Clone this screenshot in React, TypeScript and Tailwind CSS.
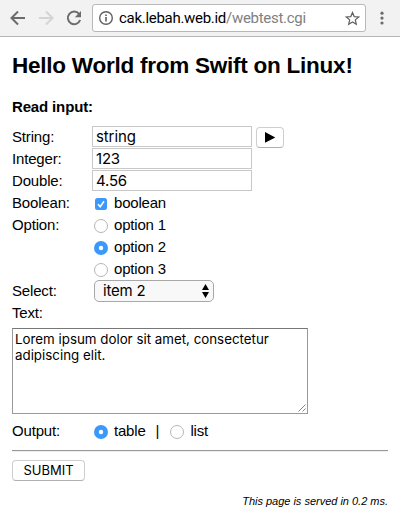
import type { ReactNode } from "react";

function Row({ label, children }: { label?: string; children?: ReactNode }) {
  return (
    <div className="flex h-[22px]">
      <span className="w-20 shrink-0 tracking-[-0.17px]">{label}</span>
      {children}
    </div>
  );
}

function TextField({ value, spacing }: { value: string; spacing: string }) {
  return (
    <input
      defaultValue={value}
      className={`h-[21px] w-40 rounded-none border border-[#c8c8c8] bg-white px-[3px] font-['Inter',sans-serif] text-[15px] leading-[19px] outline-none ${spacing}`}
    />
  );
}

function Radio({ checked = false }: { checked?: boolean }) {
  return (
    <svg className="mt-[5px] h-[14px] w-[14px] shrink-0" viewBox="0 0 14 14">
      {checked ? (
        <>
          <circle cx="7" cy="7" r="7" fill="#3b99fc" />
          <circle cx="7" cy="7" r="2.2" fill="#fff" />
        </>
      ) : (
        <circle cx="7" cy="7" r="6.5" fill="#fff" stroke="#b5b5b5" />
      )}
    </svg>
  );
}

function Option({ label, checked }: { label: string; checked?: boolean }) {
  return (
    <label className="ml-[2px] flex gap-[6px]">
      <Radio checked={checked} />
      <span className="whitespace-nowrap tracking-[-0.2px]">{label}</span>
    </label>
  );
}

function Toolbar() {
  return (
    <header className="flex h-[37px] items-center border-b border-[#b5b5b5] bg-[#f2f2f2]">
      <svg className="ml-[10px] h-4 w-4" viewBox="0 0 16 16" fill="none" stroke="#6b6b6b" strokeWidth="2">
        <path d="M15 8H2.5M8 1.5L1.5 8L8 14.5" />
      </svg>
      <svg className="ml-[12px] h-4 w-4" viewBox="0 0 16 16" fill="none" stroke="#d4d4d4" strokeWidth="2">
        <path d="M1 8H13.5M8 1.5L14.5 8L8 14.5" />
      </svg>
      <svg className="ml-[12px] h-4 w-4" viewBox="0 0 16 16" fill="none">
        <path d="M13.1 4A6.3 6.3 0 1 0 14.1 10" stroke="#6b6b6b" strokeWidth="2" />
        <path d="M15 1V7.2H8.8Z" fill="#6b6b6b" />
      </svg>
      <div className="ml-[10px] flex h-[28px] w-[274px] shrink-0 items-center rounded-[3px] border border-[#b8b8b8] bg-white">
        <svg className="ml-[6px] h-[14px] w-[14px] shrink-0" viewBox="0 0 14 14" fill="none" stroke="#606060">
          <circle cx="7" cy="7" r="6.3" strokeWidth="1.4" />
          <path d="M7 6V10.6M7 3.4V5" strokeWidth="1.6" />
        </svg>
        <div className="ml-[6px] flex-1 whitespace-nowrap font-['Roboto',sans-serif] text-[15px] tracking-[-0.29px] text-black">
          cak.lebah.web.id<span className="text-[#808080]">/webtest.cgi</span>
        </div>
        <svg className="mr-[5px] h-[15px] w-[15px] shrink-0" viewBox="0 0 15 15" fill="none" stroke="#606060" strokeWidth="1.2">
          <path d="M7.5 1.5L9.2 5.6L13.7 6L10.3 8.9L11.3 13.2L7.5 10.9L3.7 13.2L4.7 8.9L1.3 6L5.8 5.6Z" />
        </svg>
      </div>
      <svg className="ml-[14px] h-[14px] w-1" viewBox="0 0 4 14" fill="#6b6b6b">
        <circle cx="2" cy="2.2" r="1.6" />
        <circle cx="2" cy="7.1" r="1.6" />
        <circle cx="2" cy="12" r="1.6" />
      </svg>
    </header>
  );
}

export default function App() {
  return (
    <div className="h-[520px] w-[400px] overflow-hidden bg-white font-['Liberation_Sans',Arial,sans-serif] text-[15px] leading-[22px] text-black">
      <Toolbar />
      <main className="px-3">
        <h2 className="pt-[16px] text-[22.5px] leading-[26px] font-bold tracking-[-0.24px] whitespace-nowrap">Hello World from Swift on Linux!</h2>
        <h4 className="mt-[17px] font-bold tracking-[-0.15px]">Read input:</h4>
        <form className="mt-[8px]">
          <Row label="String:">
            <TextField value="string" spacing="tracking-[-0.1px]" />
            <button type="button" className="mt-px ml-1 flex h-[21px] w-7 items-center justify-center rounded-[4px] border border-[#cfcfcf] border-b-[#b0b0b0] bg-white">
              <svg className="mb-px h-[11px] w-[11px]" viewBox="0 0 11 11">
                <path d="M0 0L10.3 5.4L0 10.8Z" />
              </svg>
            </button>
          </Row>
          <Row label="Integer:"><TextField value="123" spacing="tracking-[-0.2px]" /></Row>
          <Row label="Double:"><TextField value="4.56" spacing="tracking-[-0.2px]" /></Row>
          <Row label="Boolean:">
            <label className="ml-[3px] flex gap-[7px]">
              <svg className="mt-[6px] h-3 w-3" viewBox="0 0 12 12">
                <rect width="12" height="12" rx="2.5" fill="#3b99fc" />
                <path d="M3 6.3L5.2 8.8L9 3.2" fill="none" stroke="#fff" strokeWidth="1.6" />
              </svg>
              <span className="tracking-[-0.2px]">boolean</span>
            </label>
          </Row>
          <Row label="Option:"><Option label="option 1" /></Row>
          <Row><Option label="option 2" checked /></Row>
          <Row><Option label="option 3" /></Row>
          <Row label="Select:">
            <div className="ml-[2px] flex h-[22px] w-[120px] items-center justify-between rounded-[5px] border border-[#a8a8a8] bg-[#f8f8f8] pr-1 pl-[8px] font-['Inter',sans-serif] leading-5 tracking-[-0.2px]">
              <span>item 2</span>
              <svg className="h-[14px] w-[7px]" viewBox="0 0 7 14">
                <path d="M3.5 0L7 6H0ZM0 8H7L3.5 14Z" />
              </svg>
            </div>
          </Row>
          <Row label="Text:" />
          <div className="relative mt-1 h-[86px] w-[296px]">
            <textarea
              className="block h-[86px] w-[296px] resize-none overflow-hidden rounded-none border border-[#999] border-t-[#777] bg-white px-[2px] pt-[2px] font-['Inter',sans-serif] text-[13.33px] leading-4 outline-none"
              defaultValue={"Lorem ipsum dolor sit amet, consectetur\nadipiscing elit."}
            />
            <svg className="absolute right-[2px] bottom-[2px] h-[8px] w-[8px]" viewBox="0 0 8 8" stroke="#666" strokeWidth="0.8">
              <path d="M0.5 7.5L7.5 0.5M4.5 7.5L7.5 4.5" />
            </svg>
          </div>
          <div className="mt-[6px]">
            <Row label="Output:">
              <Option label="table" checked />
              <span className="mr-[9px] ml-[10px]">|</span>
              <Option label="list" />
            </Row>
          </div>
          <hr className="mt-2 h-[2px] border-t border-b border-t-[#999] border-b-[#eee]" />
          <button type="button" className="mt-2 flex h-[21px] w-[73px] items-center justify-center rounded-[4px] border border-[#cfcfcf] border-b-[#b0b0b0] bg-white font-['Inter',sans-serif] text-[13px] leading-[19px]">
            SUBMIT
          </button>
        </form>
        <p className="mt-[12px] text-right text-[11px] leading-4 tracking-[-0.01px] whitespace-nowrap italic">This page is served in 0.2 ms.</p>
      </main>
    </div>
  );
}
